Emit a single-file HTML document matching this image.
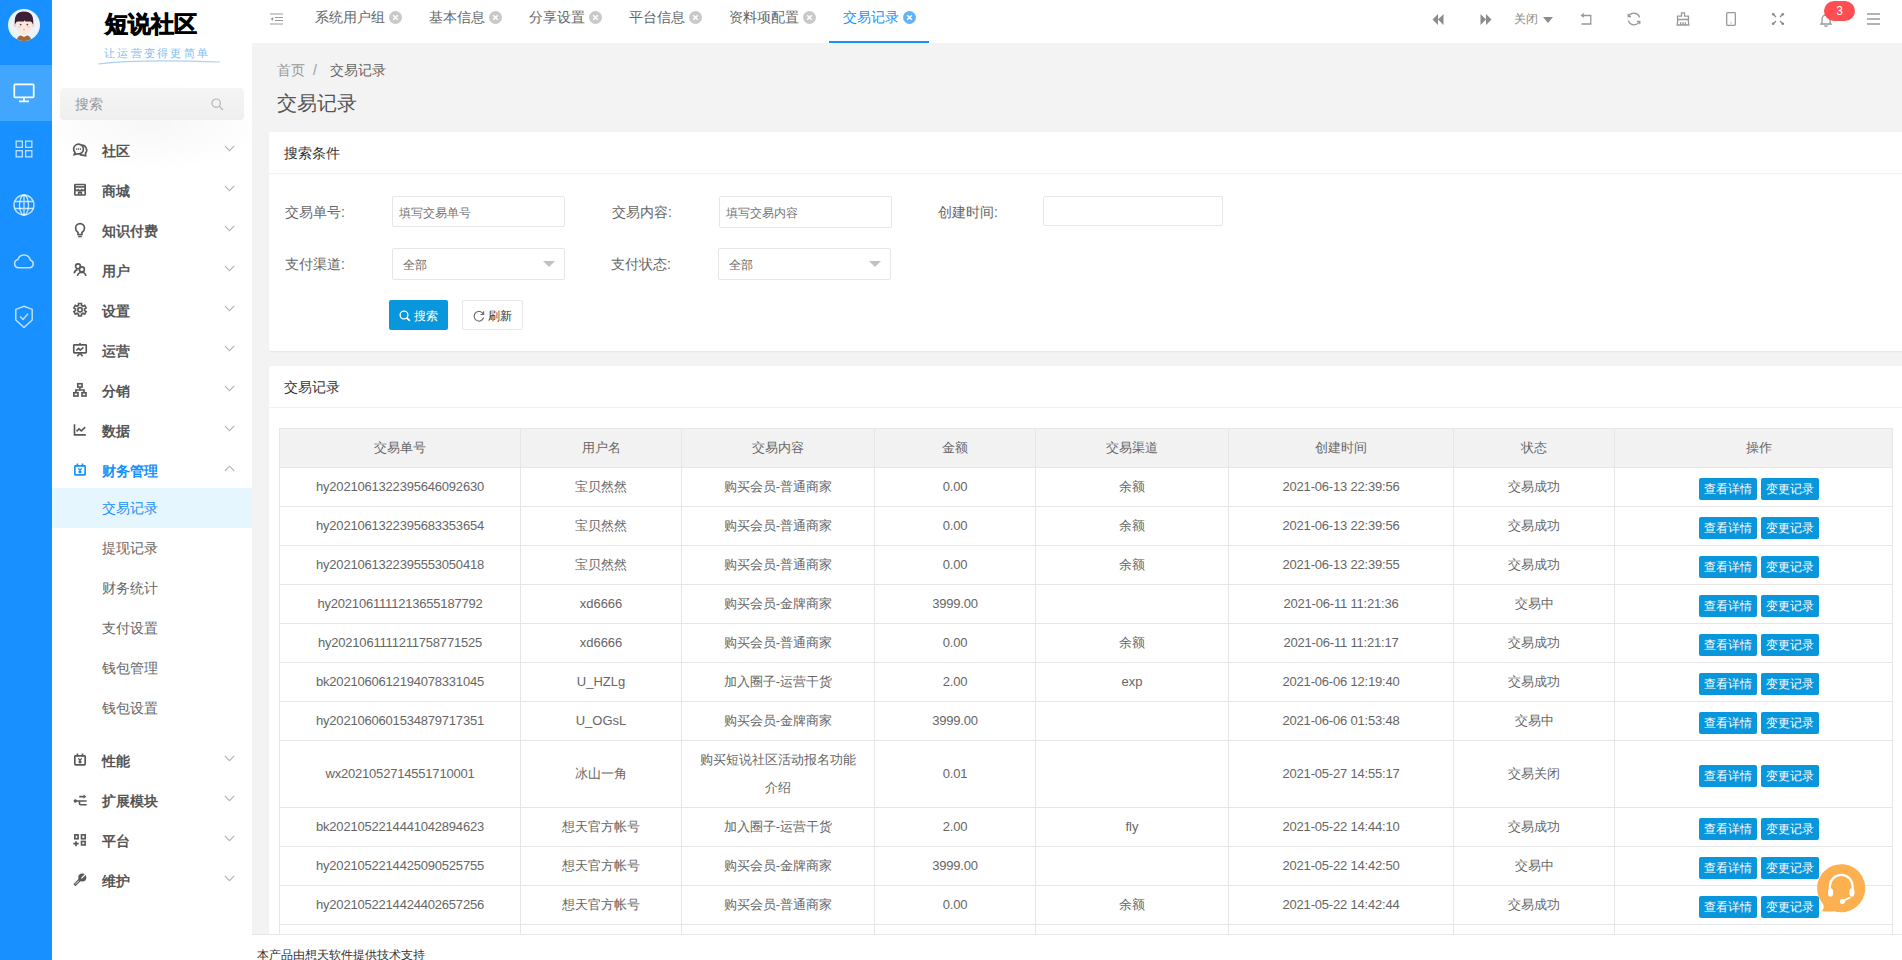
<!DOCTYPE html>
<html><head><meta charset="utf-8">
<style>
*{box-sizing:border-box;margin:0;padding:0}
html,body{width:1902px;height:960px;overflow:hidden;background:#f3f3f3;font-family:"Liberation Sans",sans-serif;color:#666}
.abs{position:absolute}
#iconbar{position:absolute;left:0;top:0;width:52px;height:960px;background:#1890ff}
#iconbar .act{position:absolute;left:0;top:65px;width:52px;height:56px;background:#42a6ff}
#side{position:absolute;left:52px;top:0;width:200px;height:960px;background:#fff}
#header{position:absolute;left:252px;top:0;width:1650px;height:43px;background:#fff}
.tab{position:absolute;top:0;height:43px;font-size:14px;line-height:35px;color:#666;white-space:nowrap}
.tab .x{position:absolute;top:11px;width:13px;height:13px}
.menu{position:absolute;left:50px;height:40px;line-height:40px;font-size:14px;font-weight:bold;color:#555;white-space:nowrap}
.sub{position:absolute;left:50px;height:40px;line-height:40px;font-size:14px;color:#666;white-space:nowrap}
.chev{position:absolute;left:172px}
.micon{position:absolute;left:20px}
.hicon{position:absolute}
#content{position:absolute;left:252px;top:43px;width:1650px;height:891px;background:#f3f3f3;overflow:hidden}
.card{position:absolute;left:17px;width:1640px;background:#fff;border-radius:2px;box-shadow:0 1px 2px 0 rgba(0,0,0,.05)}
.card .hd{height:42px;line-height:42px;padding-left:15px;font-size:14px;color:#333;border-bottom:1px solid #f2f2f2}
.lbl{position:absolute;font-size:14px;color:#666;white-space:nowrap;line-height:20px}
.inp{position:absolute;border:1px solid #e6e6e6;border-radius:2px;background:#fff;font-size:12px;color:#757575;white-space:nowrap;line-height:32px}
table{position:absolute;left:10px;top:62px;border-collapse:collapse;table-layout:fixed;width:1613px}
td,th{border:1px solid #e6e6e6;text-align:center;font-size:13px;color:#666;font-weight:normal;padding:5px 8px;line-height:28px;height:39px}
th{background:#f2f2f2}
.btn{display:inline-block;width:58px;height:22px;line-height:22px;background:#0896dc;color:#fff;font-size:12px;border-radius:2px;vertical-align:middle;margin:0 2px;position:relative;top:1px}
.n{letter-spacing:-0.2px}
tr>*:last-child{padding-left:18px;padding-right:8px}
.w{padding-left:15px;padding-right:15px}
#footer{position:absolute;left:252px;top:934px;width:1650px;height:26px;background:#fff;border-top:1px solid #e6e6e6;font-size:12px;color:#333;padding-left:5px;line-height:40px}
</style></head><body>
<div id="iconbar">
  <div class="act"></div>
  <div class="abs" style="left:8px;top:9px;width:32px;height:32px;border-radius:50%;background:#eaf4fd;overflow:hidden">
    <svg width="32" height="32" viewBox="0 0 32 32">
      <ellipse cx="7.2" cy="16" rx="1.6" ry="2" fill="#f7cdbb"/><ellipse cx="24.8" cy="16" rx="1.6" ry="2" fill="#f7cdbb"/>
      <rect x="14" y="22" width="4" height="5" fill="#f7d7c8"/>
      <path d="M8 12 Q8 25 16 25 Q24 25 24 12 Z" fill="#fde6dc"/>
      <path d="M6.8 15 Q5.8 2.6 16 2.6 Q26.2 2.6 25.2 15 L24.2 14.2 Q23.8 12.6 22.5 12.6 L17.5 12.6 L16.5 11.2 L15.8 12.6 L9.5 12.6 Q8.2 12.6 7.8 14.2 Z" fill="#3d2035"/>
      <circle cx="12.6" cy="15.6" r="0.9" fill="#3a4654"/><circle cx="19.4" cy="15.6" r="0.9" fill="#3a4654"/>
      <ellipse cx="11.3" cy="18.2" rx="1.1" ry="0.8" fill="#f8c2c2"/><ellipse cx="20.7" cy="18.2" rx="1.1" ry="0.8" fill="#f8c2c2"/>
      <path d="M14.9 20.3 h2.2 q-1.1 1.2 -2.2 0z" fill="#f25f5f"/>
      <path d="M8.6 32 Q9 27.8 12.5 26.6 L19.5 26.6 Q23 27.8 23.4 32Z" fill="#a3693b"/>
      <path d="M13 26.3 L16 28 L19 26.3 L18 25.6 L14 25.6Z" fill="#fff"/>
    </svg>
  </div>
  <svg class="abs" style="left:13px;top:83px" width="22" height="20" viewBox="0 0 22 20" fill="none" stroke="#fff" stroke-width="1.7">
    <rect x="1.3" y="1.3" width="19.4" height="13" rx="0.8"/><path d="M11 14.3v3.5M6 18.3h10"/>
  </svg>
  <svg class="abs" style="left:15px;top:140px" width="18" height="18" viewBox="0 0 18 18" fill="none" stroke="rgba(255,255,255,0.72)" stroke-width="1.3">
    <rect x="1.15" y="1.15" width="6.2" height="6.2"/><rect x="10.65" y="1.15" width="6.2" height="6.2"/>
    <rect x="1.15" y="10.65" width="6.2" height="6.2"/><rect x="10.65" y="10.65" width="6.2" height="6.2"/>
  </svg>
  <svg class="abs" style="left:13px;top:194px" width="22" height="22" viewBox="0 0 22 22" fill="none" stroke="rgba(255,255,255,0.72)" stroke-width="1.4">
    <circle cx="11" cy="11" r="10"/><ellipse cx="11" cy="11" rx="4.5" ry="10"/><path d="M11 1v20M1.5 7.5h19M1.5 14.5h19"/>
  </svg>
  <svg class="abs" style="left:13px;top:253px" width="22" height="16" viewBox="0 0 22 16" fill="none" stroke="rgba(255,255,255,0.72)" stroke-width="1.5">
    <path d="M5.5 14.8 H17 A4 4 0 0 0 17.2 7 A6.3 6.3 0 0 0 5 6.5 A4.2 4.2 0 0 0 5.5 14.8 Z"/>
  </svg>
  <svg class="abs" style="left:14px;top:305px" width="20" height="24" viewBox="0 0 20 24" fill="none" stroke="rgba(255,255,255,0.72)" stroke-width="1.5">
    <path d="M10 1.2 L18.2 4.4 V15 L10 22.6 L1.8 15 V4.4 Z"/><path d="M6.2 11.5 L9 14.5 L14 8.8"/>
  </svg>
</div>
<div id="side">
  <div class="abs" style="left:0;top:70px;width:200px;height:110px;background:radial-gradient(ellipse 120px 45px at 100px 55px,rgba(0,0,0,0.03),rgba(0,0,0,0))"></div>
  <div class="abs" style="left:53px;top:9px;font-size:23px;font-weight:bold;color:#000;letter-spacing:0px;line-height:30px;-webkit-text-stroke:0.9px #000">短说社区</div>
  <div class="abs" style="left:52px;top:45px;font-size:11px;color:#80bcf3;font-weight:normal;letter-spacing:2.3px;line-height:16px;white-space:nowrap">让运营变得更简单</div>
  <svg class="abs" style="left:44px;top:58px" width="128" height="8" viewBox="0 0 128 8"><path d="M2 6 Q40 1 124 4" stroke="#a8d2f7" stroke-width="1.2" fill="none"/></svg>
  <div class="abs" style="left:8px;top:88px;width:184px;height:32px;background:linear-gradient(#f5f5f5,#efefef);border-radius:4px;font-size:14px;color:#999;line-height:32px;padding-left:15px">搜索
    <svg class="abs" style="left:151px;top:10px" width="13" height="13" viewBox="0 0 13 13" fill="none" stroke="#b5b5b5" stroke-width="1.2"><circle cx="5.2" cy="5.2" r="4.2"/><path d="M8.2 8.2 L12 12"/></svg>
  </div>
  <div class="menu" style="top:131px">社区</div><svg class="micon" style="top:140px;left:16px" width="24" height="24" viewBox="0 0 24 24" fill="none" stroke="#595959" stroke-width="1.65"><path d="M7.04 12.46 L6.2 14.6 L9.65 13.83 A4.9 4.9 0 1 0 7.04 12.46 Z"/><path d="M13.6 5.1 A5 5 0 0 1 17.4 13.4 L17.7 15.7 L14.2 15.1 Q12.8 15.1 11.6 14.6"/><circle cx="8.6" cy="9.1" r="0.8" fill="#595959" stroke="none"/><circle cx="10.5" cy="9.1" r="0.8" fill="#595959" stroke="none"/><circle cx="12.4" cy="9.1" r="0.8" fill="#595959" stroke="none"/></svg><svg class="chev" style="top:145px;left:171.5px" width="11" height="7" viewBox="0 0 11 7" fill="none" stroke="#b3b3b3" stroke-width="1.1"><path d="M0.8 0.8 L5.5 5.6 L10.2 0.8"/></svg>
<div class="menu" style="top:171px">商城</div><svg class="micon" style="top:180px;left:16px" width="24" height="24" viewBox="0 0 24 24" fill="none" stroke="#595959" stroke-width="1.65"><rect x="6.85" y="4.5" width="10.3" height="10.5" rx="0.5"/><path d="M6.85 6.9 H17.15"/><path d="M6.85 8.6 Q8.6 11.8 10.3 9.8 Q12 11.8 13.7 9.8 Q15.4 11.8 17.15 8.6"/><path d="M10.7 15 V12.3 H13.3 V15"/></svg><svg class="chev" style="top:185px;left:171.5px" width="11" height="7" viewBox="0 0 11 7" fill="none" stroke="#b3b3b3" stroke-width="1.1"><path d="M0.8 0.8 L5.5 5.6 L10.2 0.8"/></svg>
<div class="menu" style="top:211px">知识付费</div><svg class="micon" style="top:220px;left:16px" width="24" height="24" viewBox="0 0 24 24" fill="none" stroke="#595959" stroke-width="1.65"><path d="M10 14.5 V12.5 Q7.6 11 7.6 8.1 A4.45 4.45 0 0 1 16.5 8.1 Q16.5 11 14 12.5 V14.5 Z"/><path d="M10.2 16.5 H13.8"/></svg><svg class="chev" style="top:225px;left:171.5px" width="11" height="7" viewBox="0 0 11 7" fill="none" stroke="#b3b3b3" stroke-width="1.1"><path d="M0.8 0.8 L5.5 5.6 L10.2 0.8"/></svg>
<div class="menu" style="top:251px">用户</div><svg class="micon" style="top:260px;left:16px" width="24" height="24" viewBox="0 0 24 24" fill="none" stroke="#595959" stroke-width="1.65"><circle cx="10" cy="6.3" r="2.4"/><path d="M6.2 13.4 Q6.6 10.4 9.6 9.4"/><circle cx="13.9" cy="9.4" r="2.5"/><path d="M9.4 15.9 Q10.2 12.3 13.9 12.2 Q17.2 12.3 17.9 15.9"/></svg><svg class="chev" style="top:265px;left:171.5px" width="11" height="7" viewBox="0 0 11 7" fill="none" stroke="#b3b3b3" stroke-width="1.1"><path d="M0.8 0.8 L5.5 5.6 L10.2 0.8"/></svg>
<div class="menu" style="top:291px">设置</div><svg class="micon" style="top:300px;left:16px" width="24" height="24" viewBox="0 0 24 24" fill="none" stroke="#595959" stroke-width="1.65"><path d="M9.70 5.77 L10.50 5.40 L10.56 3.51 L13.44 3.51 L13.50 5.40 L14.30 5.77 L15.02 6.28 L16.68 5.39 L18.12 7.88 L16.52 8.87 L16.60 9.75 L16.52 10.63 L18.12 11.62 L16.68 14.11 L15.02 13.22 L14.30 13.73 L13.50 14.10 L13.44 15.99 L10.56 15.99 L10.50 14.10 L9.70 13.73 L8.98 13.22 L7.32 14.11 L5.88 11.62 L7.48 10.63 L7.40 9.75 L7.48 8.87 L5.88 7.88 L7.32 5.39 L8.98 6.28Z"/><circle cx="12" cy="9.75" r="2.2"/></svg><svg class="chev" style="top:305px;left:171.5px" width="11" height="7" viewBox="0 0 11 7" fill="none" stroke="#b3b3b3" stroke-width="1.1"><path d="M0.8 0.8 L5.5 5.6 L10.2 0.8"/></svg>
<div class="menu" style="top:331px">运营</div><svg class="micon" style="top:340px;left:16px" width="24" height="24" viewBox="0 0 24 24" fill="none" stroke="#595959" stroke-width="1.65"><rect x="5.75" y="4.85" width="12.5" height="8" rx="0.6"/><path d="M12 3 V4.8 M12 13 L9.3 16.2 M12 13 L14.6 16.2"/><path d="M8.3 10.5 L10.6 8.3 L12.3 10 L15.4 7.3"/></svg><svg class="chev" style="top:345px;left:171.5px" width="11" height="7" viewBox="0 0 11 7" fill="none" stroke="#b3b3b3" stroke-width="1.1"><path d="M0.8 0.8 L5.5 5.6 L10.2 0.8"/></svg>
<div class="menu" style="top:371px">分销</div><svg class="micon" style="top:380px;left:16px" width="24" height="24" viewBox="0 0 24 24" fill="none" stroke="#595959" stroke-width="1.65"><rect x="9.75" y="3.75" width="4.25" height="3.3"/><rect x="5.85" y="12.75" width="4.15" height="3.25"/><rect x="13.95" y="12.75" width="4.05" height="3.25"/><path d="M11.9 7.2 V10 M7.9 12.7 V10 H16 V12.7"/></svg><svg class="chev" style="top:385px;left:171.5px" width="11" height="7" viewBox="0 0 11 7" fill="none" stroke="#b3b3b3" stroke-width="1.1"><path d="M0.8 0.8 L5.5 5.6 L10.2 0.8"/></svg>
<div class="menu" style="top:411px">数据</div><svg class="micon" style="top:420px;left:16px" width="24" height="24" viewBox="0 0 24 24" fill="none" stroke="#595959" stroke-width="1.65"><path d="M6.5 4.3 V14.8 H17.8"/><path d="M8.6 11.4 L11 8.8 L13.3 10.9 L17.2 7.2"/></svg><svg class="chev" style="top:425px;left:171.5px" width="11" height="7" viewBox="0 0 11 7" fill="none" stroke="#b3b3b3" stroke-width="1.1"><path d="M0.8 0.8 L5.5 5.6 L10.2 0.8"/></svg>
<div class="menu" style="top:451px;color:#1890ff">财务管理</div><svg class="micon" style="top:460px;left:16px" width="24" height="24" viewBox="0 0 24 24" fill="none" stroke="#1890ff" stroke-width="1.65"><rect x="6.85" y="5.9" width="10.3" height="8.95" rx="0.6"/><path d="M9.4 3.6 V6.6 M14.5 3.6 V6.6"/><path d="M10.3 8.4 L12 10.3 L13.7 8.4 M12 10.3 V13.4 M10.6 11.3 H13.4 M10.6 12.4 H13.4" stroke-width="1.3"/></svg><svg class="chev" style="top:465px;left:171.5px" width="11" height="7" viewBox="0 0 11 7" fill="none" stroke="#b3b3b3" stroke-width="1.1"><path d="M0.8 6 L5.5 1.2 L10.2 6"/></svg>
<div class="abs" style="left:0;top:488px;width:200px;height:40px;background:#e6f6fe"></div>
<div class="sub" style="top:488px;color:#1890ff">交易记录</div>
<div class="sub" style="top:528px;color:#666">提现记录</div>
<div class="sub" style="top:568px;color:#666">财务统计</div>
<div class="sub" style="top:608px;color:#666">支付设置</div>
<div class="sub" style="top:648px;color:#666">钱包管理</div>
<div class="sub" style="top:688px;color:#666">钱包设置</div>
<div class="menu" style="top:741px">性能</div><svg class="micon" style="top:750px;left:16px" width="24" height="24" viewBox="0 0 24 24" fill="none" stroke="#595959" stroke-width="1.65"><rect x="6.85" y="5.9" width="10.3" height="8.95" rx="0.6"/><path d="M9.4 3.6 V6.6 M14.5 3.6 V6.6"/><path d="M10.3 8.4 L12 10.3 L13.7 8.4 M12 10.3 V13.4 M10.6 11.3 H13.4 M10.6 12.4 H13.4" stroke-width="1.3"/></svg><svg class="chev" style="top:755px;left:171.5px" width="11" height="7" viewBox="0 0 11 7" fill="none" stroke="#b3b3b3" stroke-width="1.1"><path d="M0.8 0.8 L5.5 5.6 L10.2 0.8"/></svg>
<div class="menu" style="top:781px">扩展模块</div><svg class="micon" style="top:790px;left:16px" width="24" height="24" viewBox="0 0 24 24" fill="none" stroke="#595959" stroke-width="1.65"><circle cx="7.3" cy="11" r="1.7" fill="#595959" stroke="none"/><path d="M7.3 11 H18.6 M11.5 11 V13.6 Q11.5 14.75 12.6 14.75 H18.6 M11.3 6.6 H16.5"/><path d="M15.6 4.4 L18.2 6.6 L15.6 8.8 Z" stroke="none" fill="#595959"/></svg><svg class="chev" style="top:795px;left:171.5px" width="11" height="7" viewBox="0 0 11 7" fill="none" stroke="#b3b3b3" stroke-width="1.1"><path d="M0.8 0.8 L5.5 5.6 L10.2 0.8"/></svg>
<div class="menu" style="top:821px">平台</div><svg class="micon" style="top:830px;left:16px" width="24" height="24" viewBox="0 0 24 24" fill="none" stroke="#595959" stroke-width="1.65"><rect x="6.85" y="4.85" width="3.2" height="3.9"/><rect x="13.5" y="4.85" width="3.65" height="3.9"/><rect x="13.5" y="11.5" width="3.65" height="3.4"/><path d="M8 11.2 V16.2 M5.3 13.6 H10.7"/></svg><svg class="chev" style="top:835px;left:171.5px" width="11" height="7" viewBox="0 0 11 7" fill="none" stroke="#b3b3b3" stroke-width="1.1"><path d="M0.8 0.8 L5.5 5.6 L10.2 0.8"/></svg>
<div class="menu" style="top:861px">维护</div><svg class="micon" style="top:870px;left:16px" width="24" height="24" viewBox="0 0 24 24" fill="none" stroke="#595959" stroke-width="1.65"><path d="M6.4 15.2 L12 9.6" stroke-width="2.9"/><path d="M7.3 14.3 L11.1 10.5" stroke="#fff" stroke-width="0.9"/><circle cx="14.3" cy="7.5" r="4" fill="#595959" stroke="none"/><path d="M13.4 8.4 L18.6 3.2" stroke="#fff" stroke-width="1.3"/></svg><svg class="chev" style="top:875px;left:171.5px" width="11" height="7" viewBox="0 0 11 7" fill="none" stroke="#b3b3b3" stroke-width="1.1"><path d="M0.8 0.8 L5.5 5.6 L10.2 0.8"/></svg>
</div>

<div id="header"><svg class="hicon" style="left:18px;top:13px" width="13" height="12" viewBox="0 0 13 12" fill="none" stroke="#999" stroke-width="1.2"><path d="M0 1h13M5 4.5h8M5 7.5h8M0 11h13"/><path d="M3.2 4 L0.6 6 L3.2 8Z" fill="#999" stroke="none"/></svg>
<div class="tab" style="left:48.5px;width:114px;color:#666"><span class="abs" style="left:14px;top:0">系统用户组</span><svg class="x" style="left:88px" viewBox="0 0 13 13"><circle cx="6.5" cy="6.5" r="6.5" fill="#c9c9c9"/><path d="M4.2 4.2 L8.8 8.8 M8.8 4.2 L4.2 8.8" stroke="#fff" stroke-width="1.5"/></svg></div>
<div class="tab" style="left:162.5px;width:100px;color:#666"><span class="abs" style="left:14px;top:0">基本信息</span><svg class="x" style="left:74px" viewBox="0 0 13 13"><circle cx="6.5" cy="6.5" r="6.5" fill="#c9c9c9"/><path d="M4.2 4.2 L8.8 8.8 M8.8 4.2 L4.2 8.8" stroke="#fff" stroke-width="1.5"/></svg></div>
<div class="tab" style="left:262.5px;width:100px;color:#666"><span class="abs" style="left:14px;top:0">分享设置</span><svg class="x" style="left:74px" viewBox="0 0 13 13"><circle cx="6.5" cy="6.5" r="6.5" fill="#c9c9c9"/><path d="M4.2 4.2 L8.8 8.8 M8.8 4.2 L4.2 8.8" stroke="#fff" stroke-width="1.5"/></svg></div>
<div class="tab" style="left:362.5px;width:100px;color:#666"><span class="abs" style="left:14px;top:0">平台信息</span><svg class="x" style="left:74px" viewBox="0 0 13 13"><circle cx="6.5" cy="6.5" r="6.5" fill="#c9c9c9"/><path d="M4.2 4.2 L8.8 8.8 M8.8 4.2 L4.2 8.8" stroke="#fff" stroke-width="1.5"/></svg></div>
<div class="tab" style="left:462.5px;width:114px;color:#666"><span class="abs" style="left:14px;top:0">资料项配置</span><svg class="x" style="left:88px" viewBox="0 0 13 13"><circle cx="6.5" cy="6.5" r="6.5" fill="#c9c9c9"/><path d="M4.2 4.2 L8.8 8.8 M8.8 4.2 L4.2 8.8" stroke="#fff" stroke-width="1.5"/></svg></div>
<div class="tab" style="left:576.5px;width:100px;color:#1890ff"><span class="abs" style="left:14px;top:0">交易记录</span><svg class="x" style="left:74px" viewBox="0 0 13 13"><circle cx="6.5" cy="6.5" r="6.5" fill="#64b3fa"/><path d="M4.2 4.2 L8.8 8.8 M8.8 4.2 L4.2 8.8" stroke="#fff" stroke-width="1.5"/></svg><div class="abs" style="left:0;top:41px;width:100px;height:2px;background:#1890ff"></div></div>
<svg class="hicon" style="left:1180px;top:14px" width="12" height="11" viewBox="0 0 12 11" fill="#8c8c8c"><path d="M6 0 L0.5 5.5 L6 11Z M11.5 0 L6 5.5 L11.5 11Z"/></svg>
<svg class="hicon" style="left:1228px;top:14px" width="12" height="11" viewBox="0 0 12 11" fill="#8c8c8c"><path d="M0.5 0 L6 5.5 L0.5 11Z M6 0 L11.5 5.5 L6 11Z"/></svg>
<div class="abs" style="left:1262px;top:9px;font-size:12px;color:#888;line-height:20px">关闭</div>
<svg class="hicon" style="left:1291px;top:17px" width="10" height="6" viewBox="0 0 10 6" fill="#8c8c8c"><path d="M0 0h10L5 6z"/></svg>
<svg class="hicon" style="left:1328px;top:13px" width="13" height="13" viewBox="0 0 13 13" fill="none" stroke="#999" stroke-width="1.3"><path d="M2 2.5 H10.8 V11 H1.5"/><path d="M3.8 0.6 L1.6 2.5 L3.8 4.3"/></svg>
<svg class="hicon" style="left:1375px;top:12px" width="14" height="14" viewBox="0 0 14 14" fill="none" stroke="#999" stroke-width="1.3"><path d="M12.6 5.5 A5.9 5.9 0 0 0 1.8 4.2"/><path d="M1.4 8.5 A5.9 5.9 0 0 0 12.2 9.8"/><path d="M1.2 1.8 V4.6 H4"/><path d="M12.8 12.2 V9.4 H10"/></svg>
<svg class="hicon" style="left:1424px;top:12px" width="14" height="14" viewBox="0 0 14 14" fill="none" stroke="#999" stroke-width="1.3"><path d="M5.5 0.8 h3 v3.3 h4 v3.4 h-11 v-3.4 h4z"/><path d="M1.8 7.5 L1.2 13 H12.8 L12.2 7.5 M4.6 13 V10.2 M7 13 V10 M9.4 13 V10.2"/></svg>
<svg class="hicon" style="left:1474px;top:12px" width="10" height="14" viewBox="0 0 10 14" fill="none" stroke="#999" stroke-width="1.3"><rect x="0.7" y="0.7" width="8.6" height="12.6" rx="0.8"/><path d="M4.5 10.8h1" stroke-width="1.2"/></svg>
<svg class="hicon" style="left:1519px;top:12px" width="14" height="14" viewBox="0 0 14 14" fill="#888" stroke="#888" stroke-width="1.2"><path d="M2 2 L5 5 M12 2 L9 5 M2 12 L5 9 M12 12 L9 9"/><circle cx="2.2" cy="2.2" r="1.3" stroke="none"/><circle cx="11.8" cy="2.2" r="1.3" stroke="none"/><circle cx="2.2" cy="11.8" r="1.3" stroke="none"/><circle cx="11.8" cy="11.8" r="1.3" stroke="none"/></svg>
<svg class="hicon" style="left:1568px;top:13px" width="12" height="14" viewBox="0 0 12 14" fill="none" stroke="#999" stroke-width="1.3"><path d="M1 11 H11 L10 9.5 V6 A4 4 0 0 0 2 6 V9.5 Z"/><path d="M4.5 12.3 A1.6 1.6 0 0 0 7.5 12.3"/></svg>
<div class="abs" style="left:1572px;top:1px;width:31px;height:20px;border-radius:10px;background:#ff4d51;color:#fff;font-size:12px;line-height:20px;text-align:center">3</div>
<svg class="hicon" style="left:1615px;top:13px" width="13" height="12" viewBox="0 0 13 12" fill="none" stroke="#999" stroke-width="1.3"><path d="M0 1h13M0 6h13M0 11h13"/></svg>
</div>
<div id="content"><div class="abs" style="left:25px;top:17px;font-size:14px;line-height:20px;color:#999;white-space:nowrap">首页<span style="margin:0 13px 0 8px;color:#999">/</span><span style="color:#666">交易记录</span></div>
<div class="abs" style="left:25px;top:48px;font-size:20px;line-height:24px;color:#555;white-space:nowrap">交易记录</div>
<div class="card" style="top:89px;height:219px">
  <div class="hd">搜索条件</div>
  <div class="lbl" style="left:16px;top:70px">交易单号:</div>
  <div class="inp" style="left:123px;top:64px;width:173px;height:31px;padding-left:6px">填写交易单号</div>
  <div class="lbl" style="left:343px;top:70px">交易内容:</div>
  <div class="inp" style="left:450px;top:64px;width:173px;height:32px;padding-left:6px">填写交易内容</div>
  <div class="lbl" style="left:669px;top:70px">创建时间:</div>
  <div class="inp" style="left:774px;top:64px;width:180px;height:30px"></div>
  <div class="lbl" style="left:16px;top:122px">支付渠道:</div>
  <div class="inp" style="left:123px;top:116px;width:173px;height:32px;padding-left:10px;color:#666">全部
    <svg class="abs" style="left:150px;top:12px" width="12" height="6" viewBox="0 0 12 6" fill="#c2c2c2"><path d="M0 0h12L6 6z"/></svg></div>
  <div class="lbl" style="left:342px;top:122px">支付状态:</div>
  <div class="inp" style="left:449px;top:116px;width:173px;height:32px;padding-left:10px;color:#666">全部
    <svg class="abs" style="left:150px;top:12px" width="12" height="6" viewBox="0 0 12 6" fill="#c2c2c2"><path d="M0 0h12L6 6z"/></svg></div>
  <div class="abs" style="left:120px;top:168px;width:59px;height:30px;background:#0896dc;border-radius:2px;color:#fff;font-size:12px;line-height:32px;padding-left:25px">搜索
    <svg class="abs" style="left:10px;top:10px" width="12" height="12" viewBox="0 0 12 12" fill="none" stroke="#fff" stroke-width="1.3"><circle cx="5" cy="5" r="3.9"/><path d="M7.8 7.8 L10.8 10.8" stroke-width="1.8"/></svg></div>
  <div class="abs" style="left:193px;top:168px;width:61px;height:30px;border:1px solid #e6e6e6;border-radius:2px;color:#333;font-size:12px;line-height:30px;padding-left:25px">刷新
    <svg class="abs" style="left:10px;top:9px" width="12" height="12" viewBox="0 0 12 12" fill="none" stroke="#666" stroke-width="1.1"><path d="M10.3 4.2 A4.8 4.8 0 1 0 10.6 7.5"/><path d="M10.6 1.2 V4.5 H7.5"/></svg></div>
</div>
<div class="card" style="top:323px;height:600px">
  <div class="hd">交易记录</div>
  <table>
<tr><th style="width:241px">交易单号</th><th style="width:161px">用户名</th><th style="width:193px">交易内容</th><th style="width:161px">金额</th><th style="width:193px">交易渠道</th><th style="width:225px">创建时间</th><th style="width:161px">状态</th><th style="width:278px">操作</th></tr>
<tr><td class="n">hy2021061322395646092630</td><td class="">宝贝然然</td><td class="w">购买会员-普通商家</td><td class="n">0.00</td><td class="">余额</td><td class="n">2021-06-13 22:39:56</td><td class="">交易成功</td><td><span class="btn">查看详情</span><span class="btn">变更记录</span></td></tr>
<tr><td class="n">hy2021061322395683353654</td><td class="">宝贝然然</td><td class="w">购买会员-普通商家</td><td class="n">0.00</td><td class="">余额</td><td class="n">2021-06-13 22:39:56</td><td class="">交易成功</td><td><span class="btn">查看详情</span><span class="btn">变更记录</span></td></tr>
<tr><td class="n">hy2021061322395553050418</td><td class="">宝贝然然</td><td class="w">购买会员-普通商家</td><td class="n">0.00</td><td class="">余额</td><td class="n">2021-06-13 22:39:55</td><td class="">交易成功</td><td><span class="btn">查看详情</span><span class="btn">变更记录</span></td></tr>
<tr><td class="n">hy2021061111213655187792</td><td class="">xd6666</td><td class="w">购买会员-金牌商家</td><td class="n">3999.00</td><td class=""></td><td class="n">2021-06-11 11:21:36</td><td class="">交易中</td><td><span class="btn">查看详情</span><span class="btn">变更记录</span></td></tr>
<tr><td class="n">hy2021061111211758771525</td><td class="">xd6666</td><td class="w">购买会员-普通商家</td><td class="n">0.00</td><td class="">余额</td><td class="n">2021-06-11 11:21:17</td><td class="">交易成功</td><td><span class="btn">查看详情</span><span class="btn">变更记录</span></td></tr>
<tr><td class="n">bk2021060612194078331045</td><td class="">U_HZLg</td><td class="w">加入圈子-运营干货</td><td class="n">2.00</td><td class="">exp</td><td class="n">2021-06-06 12:19:40</td><td class="">交易成功</td><td><span class="btn">查看详情</span><span class="btn">变更记录</span></td></tr>
<tr><td class="n">hy2021060601534879717351</td><td class="">U_OGsL</td><td class="w">购买会员-金牌商家</td><td class="n">3999.00</td><td class=""></td><td class="n">2021-06-06 01:53:48</td><td class="">交易中</td><td><span class="btn">查看详情</span><span class="btn">变更记录</span></td></tr>
<tr><td class="n">wx2021052714551710001</td><td class="">冰山一角</td><td class="w">购买短说社区活动报名功能介绍</td><td class="n">0.01</td><td class=""></td><td class="n">2021-05-27 14:55:17</td><td class="">交易关闭</td><td><span class="btn">查看详情</span><span class="btn">变更记录</span></td></tr>
<tr><td class="n">bk2021052214441042894623</td><td class="">想天官方帐号</td><td class="w">加入圈子-运营干货</td><td class="n">2.00</td><td class="">fly</td><td class="n">2021-05-22 14:44:10</td><td class="">交易成功</td><td><span class="btn">查看详情</span><span class="btn">变更记录</span></td></tr>
<tr><td class="n">hy2021052214425090525755</td><td class="">想天官方帐号</td><td class="w">购买会员-金牌商家</td><td class="n">3999.00</td><td class=""></td><td class="n">2021-05-22 14:42:50</td><td class="">交易中</td><td><span class="btn">查看详情</span><span class="btn">变更记录</span></td></tr>
<tr><td class="n">hy2021052214424402657256</td><td class="">想天官方帐号</td><td class="w">购买会员-普通商家</td><td class="n">0.00</td><td class="">余额</td><td class="n">2021-05-22 14:42:44</td><td class="">交易成功</td><td><span class="btn">查看详情</span><span class="btn">变更记录</span></td></tr>
<tr><td class="n">hy2021052214420000000000</td><td class="">想天官方帐号</td><td class="w">购买会员-普通商家</td><td class="n">0.00</td><td class="">余额</td><td class="n">2021-05-22 14:42:00</td><td class="">交易成功</td><td><span class="btn">查看详情</span><span class="btn">变更记录</span></td></tr>
  </table>
</div>
<div class="abs" style="left:1565px;top:821px;width:50px;height:50px">
  <svg width="50" height="50" viewBox="0 0 50 50"><path d="M5.8 39.8 Q8.2 43.8 4.6 47.3 Q11 47.9 17.2 47.3 A24.1 24.1 0 1 0 5.8 39.8 Z" fill="#fdb04f"/>
  <path d="M12.9 29 V22.3 A11.35 11.35 0 0 1 35.6 22.3 V29" fill="none" stroke="#fff" stroke-width="2.2"/>
  <ellipse cx="13.6" cy="28.5" rx="2.6" ry="4.2" fill="#fff"/><ellipse cx="34.9" cy="28.5" rx="2.6" ry="4.2" fill="#fff"/>
  <path d="M26 37 L33.5 33.2" stroke="#fff" stroke-width="1.8"/><circle cx="25.5" cy="37.3" r="2.6" fill="#fff"/></svg>
</div>
</div>
<div id="footer">本产品由想天软件提供技术支持</div>
</body></html>
